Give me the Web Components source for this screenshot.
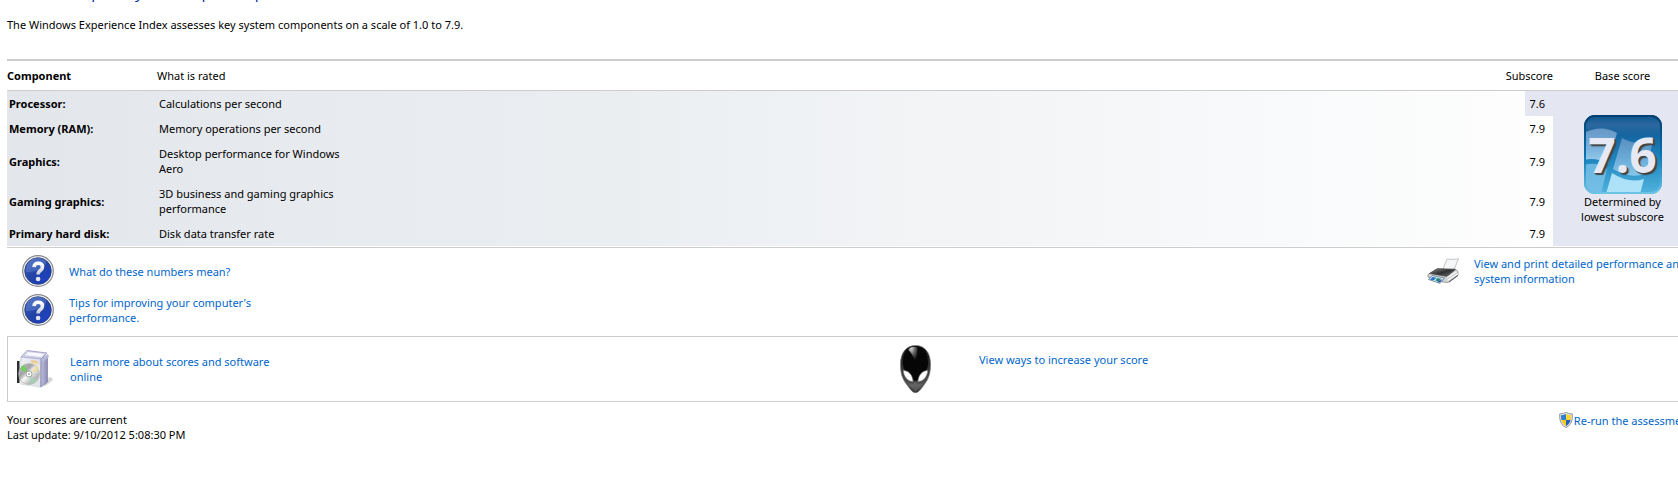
<!DOCTYPE html>
<html lang="en">
<head>
<meta charset="utf-8">
<title>Performance Information and Tools</title>
<style>
  body {
    margin: 0;
    overflow: hidden;
    background: #fff;
    color: #000;
    font: 11px/15px "Noto Sans", "Open Sans", sans-serif;
  }
</style>
</head>
<body>
<experience-page></experience-page>

<script>
// Icon set, one inline SVG per name
const ICONS = {
  help: `
    <svg width="32" height="32" viewBox="0 0 32 32" aria-hidden="true">
      <defs>
        <linearGradient id="ball" x1="0" y1="0" x2="1" y2="1">
          <stop offset="0" stop-color="#3f63bd"/>
          <stop offset=".5" stop-color="#2143a6"/>
          <stop offset="1" stop-color="#1b3fd0"/>
        </linearGradient>
        <linearGradient id="mark" x1="0" y1="0" x2="0" y2="1">
          <stop offset="0" stop-color="#fff"/>
          <stop offset="1" stop-color="#c9cdd6"/>
        </linearGradient>
      </defs>
      <circle cx="16" cy="16" r="15.3" fill="#f4f4f4" stroke="#85888c" stroke-width="1.2"/>
      <circle cx="16" cy="16" r="13.3" fill="url(#ball)" stroke="#2b3f7a" stroke-width=".8"/>
      <path d="M4 17A12 12 0 0 1 24 6C26 12 16 17 4 17Z" fill="#7e9ae0" opacity=".35"/>
      <path d="M12 12.2C12.2 9.4 13.8 8.3 16.3 8.3C19 8.3 20.5 9.8 20.5 12C20.5 14.2 18.9 15 17.6 16.1C16.5 17 16.1 17.7 16.1 19.6" fill="none" stroke="url(#mark)" stroke-width="3.6"/>
      <circle cx="16.1" cy="24" r="2.3" fill="#e3e5ea"/>
    </svg>`,
  printer: `
    <svg width="32" height="26" viewBox="0 0 32 26" aria-hidden="true">
      <defs>
        <linearGradient id="lid" x1="0" y1="0" x2="1" y2="1">
          <stop offset="0" stop-color="#8c8c8c"/>
          <stop offset=".5" stop-color="#303030"/>
          <stop offset="1" stop-color="#777"/>
        </linearGradient>
      </defs>
      <path d="M16 11L20 1Q26 2 31.5 .8L26.5 13Z" fill="#f6f7f8" stroke="#b4b8bc" stroke-width=".8"/>
      <path d="M1 16.500L9 11.500L28 11L31 13.500V17L21 24.500L16 24L1 19Z" fill="#d0d3d6" stroke="#777b80" stroke-width=".7"/>
      <path d="M2.500 15.500L10.500 10.500L28.500 11.500L20 18.500Z" fill="url(#lid)" stroke="#444" stroke-width=".6"/>
      <path d="M20 19.500L30 13.500M20.500 22.500L31 15.500" stroke="#f5f5f5" stroke-width="1.200"/>
      <path d="M22 24L31 17.500" stroke="#555" stroke-width="1"/>
      <path d="M5 17.500L17.500 20L13 25.300L1.500 21.500Z" fill="#dcebf7" stroke="#53677a" stroke-width=".7"/>
      <path d="M5.500 19L9.500 19.800L6.500 22.500L3 21.500Z" fill="#2774c8"/>
      <path d="M10 20L14 20.800L12 23.500L8.500 22.800Z" fill="#268b70"/>
      <path d="M13.500 22L15.500 21L13 24.500L10 24Z" fill="#2459a8"/>
    </svg>`,
  software: `
    <svg width="38" height="40" viewBox="0 0 38 40" aria-hidden="true">
      <defs>
        <linearGradient id="front" x1="0" y1="0" x2="1" y2="1">
          <stop offset="0" stop-color="#f3f3fb"/>
          <stop offset="1" stop-color="#c5c6de"/>
        </linearGradient>
        <linearGradient id="side" x1="0" y1="0" x2="1" y2="0">
          <stop offset="0" stop-color="#bfc0dc"/>
          <stop offset="1" stop-color="#8b8cb4"/>
        </linearGradient>
        <linearGradient id="disc" x1="0" y1="0" x2="1" y2="1">
          <stop offset="0" stop-color="#c4c6c8"/>
          <stop offset=".35" stop-color="#a2a4a6"/>
          <stop offset=".5" stop-color="#f8f8f8"/>
          <stop offset=".75" stop-color="#b4b6b6"/>
          <stop offset="1" stop-color="#dde3df"/>
        </linearGradient>
      </defs>
      <path d="M28 38L37 31L35 28L29 30Z" fill="#777" opacity=".3"/>
      <path d="M5 8L11 1.500L31 4L25 10Z" fill="#dcdcef" stroke="#9091bb" stroke-width=".8"/>
      <path d="M12 2.500L29 4.500L25 8.500L8 6.500Z" fill="#f7f7fd" stroke="#a9aaca" stroke-width=".5"/>
      <path d="M5 8L25 10V38L5 35Z" fill="url(#front)" stroke="#a6a7c7" stroke-width=".7"/>
      <path d="M25 10L31.500 6V33L25 38Z" fill="url(#side)" stroke="#7d7ea6" stroke-width=".7"/>
      <path d="M25 10L32 5L33 8L27 13Z" fill="#b8b9d6"/>
      <path d="M15 11Q24 10 23 20L19 28Z" fill="#eccb88" opacity=".9"/>
      <path d="M3 12L24 15V39L3 35Z" fill="#e9f1ea" opacity=".7"/>
      <rect x="1" y="12" width="2.500" height="22" fill="#2d2d2d"/>
      <circle cx="13" cy="25" r="10.500" fill="url(#disc)" stroke="#a3a9a6" stroke-width=".5"/>
      <path d="M13 25L4 20A10 10 0 0 1 8 16Z" fill="#74cc5d"/>
      <path d="M13 25L15 35A10 10 0 0 0 20 32Z" fill="#9bd7b0" opacity=".7"/>
      <path d="M13 25L20 17A10 10 0 0 1 23 21Z" fill="#f1d38c" opacity=".7"/>
      <circle cx="13" cy="25" r="3" fill="#fff" stroke="#8f9191" stroke-width=".8"/>
      <circle cx="13" cy="25" r="1" fill="#a8a8a8"/>
    </svg>`,
  alien: `
    <svg width="32" height="48" viewBox="0 0 32 48" aria-hidden="true">
      <defs>
        <radialGradient id="shine" cx=".35" cy=".1" r=".8">
          <stop offset="0" stop-color="#d5d5d5"/>
          <stop offset=".5" stop-color="#606060"/>
          <stop offset="1" stop-color="#080808"/>
        </radialGradient>
        <linearGradient id="chin" x1="0" y1="0" x2="0" y2="1">
          <stop offset="0" stop-color="#111"/>
          <stop offset=".6" stop-color="#3c3c3c"/>
          <stop offset=".85" stop-color="#555"/>
          <stop offset="1" stop-color="#333"/>
        </linearGradient>
      </defs>
      <path d="M15.500 .5C25 .5 30.500 8 30.500 19C30.500 28 29 33.500 24 40C20.500 45 18 47.800 15.500 47.800C13 47.800 10.500 45 7 40C2 33.500 .5 28 .5 19C.5 8 6 .5 15.500 .5Z" fill="url(#chin)" stroke="#777" stroke-width=".7"/>
      <path d="M15.500 1.500C24 1.500 28 8 28 18C28 27 21 31 15.500 37C10 31 3 27 3 18C3 8 7 1.500 15.500 1.500Z" fill="#060606"/>
      <path d="M8 5C10 1.500 15 1 17.500 2.500C18 7 17 13 15.500 18C14 12 11 7 8 5Z" fill="url(#shine)"/>
      <path d="M3.200 25.500C8.500 25.500 12.500 29.500 13 36.500C7.500 36.500 3.700 31.500 3.200 25.500Z" fill="#fff" stroke="#777" stroke-width=".6"/>
      <path d="M27.800 25.500C22.500 25.500 18.500 29.500 18 36.500C23.500 36.500 27.300 31.500 27.800 25.500Z" fill="#fff" stroke="#777" stroke-width=".6"/>
      <path d="M8 38.500L13.500 39L15.500 35L17.500 39L23 38.500L15.500 46.500Z" fill="#777" opacity=".4"/>
    </svg>`,
  shield: `
    <svg width="14" height="16" viewBox="0 0 14 16" aria-hidden="true">
      <defs>
        <clipPath id="inner"><path d="M7 1.900Q9.500 3.200 12 3.200Q12.500 10.800 7 14.200Q1.500 10.800 2 3.200Q4.500 3.200 7 1.900Z"/></clipPath>
      </defs>
      <path d="M7 .4Q9.800 2 13.300 1.900Q14.300 12 7 15.700Q-.3 12 .7 1.900Q4.200 2 7 .4Z" fill="#e0e2e3" stroke="#7f868b" stroke-width=".8"/>
      <g clip-path="url(#inner)">
        <path d="M0 0H7V8H0Z" fill="#2f7fce"/>
        <path d="M7 0H14V8H7Z" fill="#ffd534"/>
        <path d="M0 8H7V16H0Z" fill="#fbc81f"/>
        <path d="M7 8H14V16H7Z" fill="#1f63b8"/>
      </g>
    </svg>`
};

// Link with an icon in front of it
class TaskLink extends HTMLElement {
  constructor() {
    super();
    this.attachShadow({ mode: 'open' });
  }

  connectedCallback() {
    const icon = this.getAttribute('icon');
    this.shadowRoot.innerHTML = `
      <style>
        :host {
          display: block;
        }
        a {
          display: flex;
          align-items: center;
          color: #0066cc;
          text-decoration: none;
        }
        a:hover {
          text-decoration: underline;
        }
        .icon {
          flex: none;
          display: flex;
          width: var(--icon-space, 47px);
        }
        .label {
          white-space: nowrap;
        }
        :host([icon="shield"]) {
          --icon-space: 15px;
        }
        :host([icon="software"]) {
          --icon-space: 54px;
        }
        :host([icon="alien"]) {
          --icon-space: 79px;
        }
        :host([icon="alien"]) a {
          align-items: flex-start;
        }
        :host([icon="alien"]) .label {
          padding-top: 7px;
        }
      </style>
      <a href="#${icon}">
        <span class="icon">${ICONS[icon] || ''}</span>
        <span class="label"><slot></slot></span>
      </a>
    `;
  }
}
customElements.define('task-link', TaskLink);

// Blue tile with the base score over the Windows flag
class ScoreBadge extends HTMLElement {
  constructor() {
    super();
    this.attachShadow({ mode: 'open' });
    this.shadowRoot.innerHTML = `
      <style>
        :host {
          display: inline-grid;
          place-items: center;
          vertical-align: top;
        }
        svg, .value {
          grid-area: 1 / 1;
        }
        .value {
          color: #e6e8f4;
          font-size: 48px;
          font-weight: bold;
          line-height: 79px;
          text-shadow: 1px 1px 0 #444, 2px 2px 1px #444;
        }
      </style>
      <svg width="78" height="79" viewBox="0 0 78 79" aria-hidden="true">
        <defs>
          <linearGradient id="tile" x1="0" y1="0" x2="0" y2="1">
            <stop offset="0" stop-color="#07568f"/>
            <stop offset=".12" stop-color="#2c679e"/>
            <stop offset=".26" stop-color="#1465a0"/>
            <stop offset=".6" stop-color="#2389c2"/>
            <stop offset="1" stop-color="#52b4dc"/>
          </linearGradient>
          <linearGradient id="pane" x1="0" y1="0" x2="0" y2="1">
            <stop offset="0" stop-color="#6f9dca"/>
            <stop offset=".5" stop-color="#82b5de"/>
            <stop offset="1" stop-color="#a4d6f2"/>
          </linearGradient>
          <linearGradient id="edge" x1="0" y1="0" x2="0" y2="1">
            <stop offset="0" stop-color="#003f70"/>
            <stop offset=".5" stop-color="#0873b1"/>
            <stop offset="1" stop-color="#6bc4e6"/>
          </linearGradient>
          <clipPath id="round"><rect width="78" height="79" rx="11"/></clipPath>
        </defs>
        <g clip-path="url(#round)">
          <rect width="78" height="79" fill="url(#tile)"/>
          <path d="M0 18Q17 9 33 18L24 49Q12 42 0 45Z" fill="url(#pane)" opacity=".9"/>
          <path d="M38 23Q52 31 69 26L61 59Q45 64 29 54Z" fill="url(#pane)" opacity=".75"/>
          <path d="M0 50Q12 46 23 54L17 79H0Z" fill="#7cc2e8" opacity=".8"/>
          <path d="M28 58Q45 69 60 64L56 79H22Z" fill="#b9e8fc" opacity=".9"/>
        </g>
        <rect x="1" y="1" width="76" height="77" rx="10" fill="none" stroke="url(#edge)" stroke-width="2"/>
      </svg>
      <span class="value"><slot></slot></span>
    `;
  }
}
customElements.define('score-badge', ScoreBadge);

// Table of the rated components
class ScoreTable extends HTMLElement {
  constructor() {
    super();
    this.attachShadow({ mode: 'open' });
    this.scores = [
      { name: 'Processor', rated: 'Calculations per second', score: '7.6' },
      { name: 'Memory (RAM)', rated: 'Memory operations per second', score: '7.9' },
      { name: 'Graphics', rated: 'Desktop performance for Windows Aero', score: '7.9' },
      { name: 'Gaming graphics', rated: '3D business and gaming graphics performance', score: '7.9' },
      { name: 'Primary hard disk', rated: 'Disk data transfer rate', score: '7.9' }
    ];
  }

  connectedCallback() {
    this.render();
  }

  // The base score is the lowest subscore
  get lowest() {
    return this.scores.map(row => row.score).sort()[0];
  }

  renderRow(row, index) {
    const base = index === 0
      ? `<td class="base" rowspan="${this.scores.length}">
           <score-badge>${this.lowest}</score-badge>
           <div>Determined by<br>lowest subscore</div>
         </td>`
      : '';

    return `
      <tr>
        <th scope="row">${row.name}:</th>
        <td><div class="rated">${row.rated}</div></td>
        <td></td>
        <td class="score${row.score === this.lowest ? ' lowest' : ''}">${row.score}</td>
        ${base}
      </tr>`;
  }

  render() {
    this.shadowRoot.innerHTML = `
      <style>
        :host {
          display: block;
          padding-bottom: 1px;
          border-top: 2px solid #ccc;
          border-bottom: 1px solid #ccc;
        }
        table {
          width: 100%;
          border-spacing: 0;
          table-layout: fixed;
        }
        .component { width: 150px; }
        .spare { width: 48px; }
        .sub { width: 28px; }
        .total { width: 139px; }
        th {
          text-align: left;
        }
        thead th {
          padding: 7px 0;
          border-bottom: 1px solid #ccc;
          font-weight: normal;
        }
        thead th:first-child {
          font-weight: bold;
        }
        thead .right {
          text-align: right;
        }
        thead .center {
          text-align: center;
        }
        tbody {
          background: linear-gradient(to right, #e3e6eb, #ebeef1 35%, #fff 95%);
        }
        tbody th, tbody td {
          padding: 5px 2px;
          vertical-align: middle;
        }
        .rated {
          max-width: 200px;
        }
        tbody .score {
          padding-right: 8px;
          text-align: right;
        }
        tbody .lowest, tbody .base {
          background: #e4e6f1;
        }
        tbody .base {
          padding-top: 7px;
          text-align: center;
        }
      </style>
      <table>
        <colgroup>
          <col class="component"><col><col class="spare"><col class="sub"><col class="total">
        </colgroup>
        <thead>
          <tr>
            <th scope="col">Component</th>
            <th scope="col">What is rated</th>
            <th scope="col" colspan="2" class="right">Subscore</th>
            <th scope="col" class="center">Base score</th>
          </tr>
        </thead>
        <tbody>
          ${this.scores.map((row, index) => this.renderRow(row, index)).join('')}
        </tbody>
      </table>
    `;
  }
}
customElements.define('score-table', ScoreTable);

// Framed strip with two links side by side
class LinkPanel extends HTMLElement {
  constructor() {
    super();
    this.attachShadow({ mode: 'open' });
    this.shadowRoot.innerHTML = `
      <style>
        :host {
          display: grid;
          grid-template-columns: 53fr 47fr;
          align-items: center;
          padding: 8px 0;
          border: 1px solid #ccc;
        }
        .first {
          padding-left: 8px;
        }
      </style>
      <div class="first"><slot name="first"></slot></div>
      <div><slot name="second"></slot></div>
    `;
  }
}
customElements.define('link-panel', LinkPanel);

// The whole page; it runs a little past the right edge of the window
class ExperiencePage extends HTMLElement {
  constructor() {
    super();
    this.attachShadow({ mode: 'open' });
    this.shadowRoot.innerHTML = `
      <style>
        :host {
          display: block;
          width: calc(100% - 7px + 14px);
          margin: -18px 0 0 7px;
        }
        h1 {
          margin: 0;
          color: #003399;
          font-size: 15px;
          font-weight: normal;
          line-height: 20px;
        }
        p {
          margin: 0;
        }
        .intro {
          padding: 15px 0 27px;
        }
        .help {
          display: flex;
          justify-content: space-between;
          align-items: flex-start;
          padding: 7px 0 10px 15px;
        }
        .questions {
          display: grid;
          gap: 7px;
        }
        .print {
          width: 265px;
          padding-top: 1px;
        }
        footer {
          display: flex;
          justify-content: space-between;
          align-items: flex-start;
          padding-top: 10px;
        }
      </style>
      <h1>Rate and improve your computer's performance</h1>
      <p class="intro">The Windows Experience Index assesses key system components on a scale of 1.0 to 7.9.</p>
      <score-table></score-table>
      <div class="help">
        <div class="questions">
          <task-link icon="help">What do these numbers mean?</task-link>
          <task-link icon="help">Tips for improving your computer's<br>performance.</task-link>
        </div>
        <task-link class="print" icon="printer">View and print detailed performance and<br>system information</task-link>
      </div>
      <link-panel>
        <task-link slot="first" icon="software">Learn more about scores and software<br>online</task-link>
        <task-link slot="second" icon="alien">View ways to increase your score</task-link>
      </link-panel>
      <footer>
        <p>Your scores are current<br>Last update: 9/10/2012 5:08:30 PM</p>
        <task-link icon="shield">Re-run the assessment</task-link>
      </footer>
    `;
  }
}
customElements.define('experience-page', ExperiencePage);
</script>
</body>
</html>
